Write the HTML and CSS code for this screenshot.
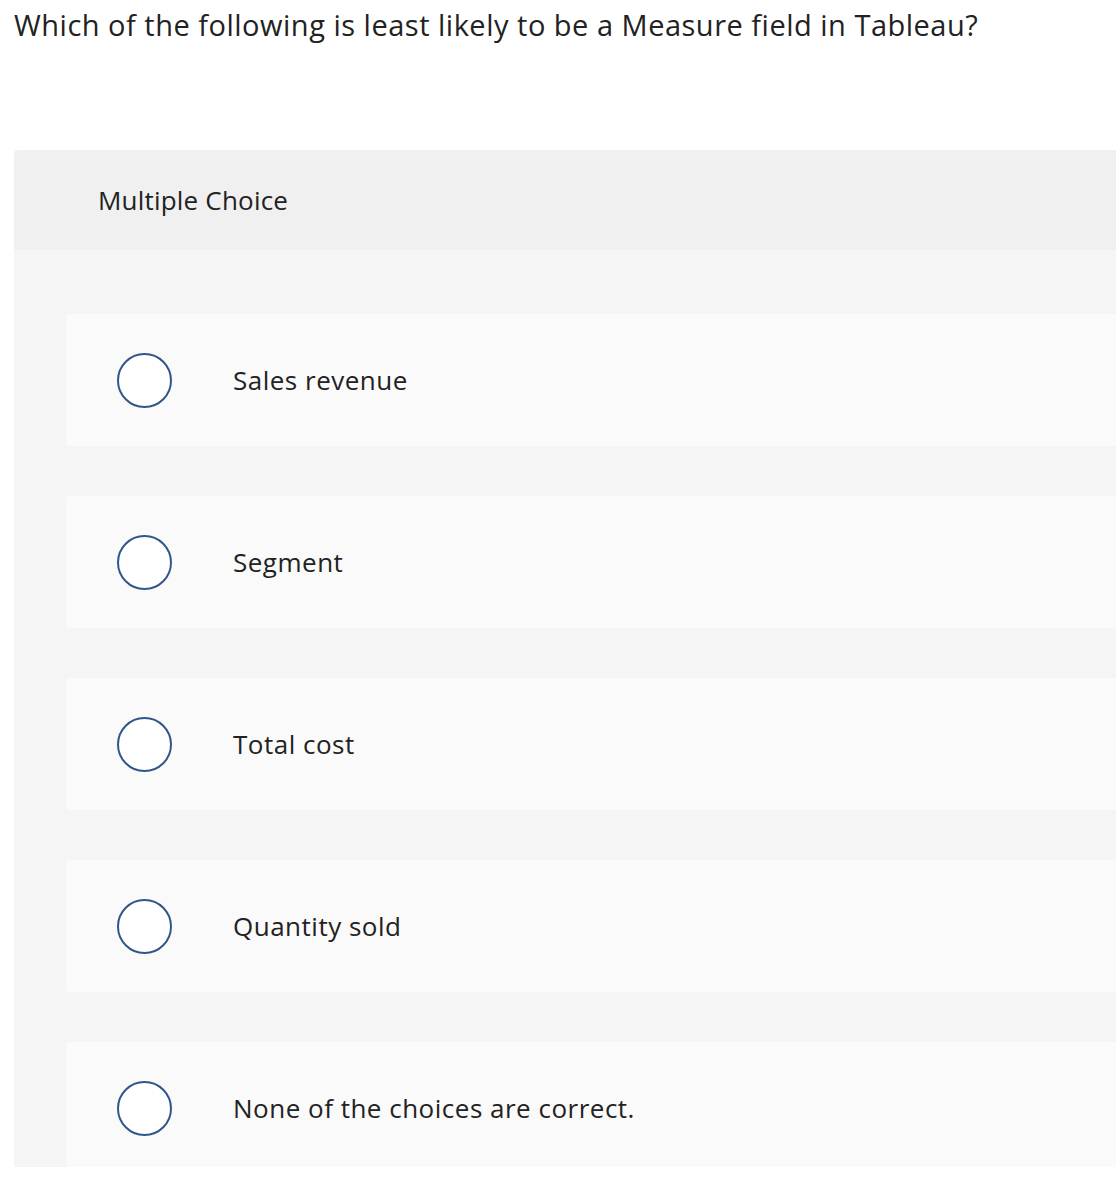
FILE: index.html
```html
<!DOCTYPE html>
<html lang="en">
<head>
  <meta charset="UTF-8" />
  <title>Multiple Choice</title>
  <link rel="stylesheet" href="styles.css">
</head>
<body>

  <!-- Pertanyaan -->
  <h1 class="question">Which of the following is least likely to be a Measure field in Tableau?</h1>

  <div class="panel">
    <div class="panel-head">Multiple Choice</div>

    <div class="choices">
      <label class="choice"><span class="radio"></span><span class="choice-text">Sales revenue</span></label>
      <label class="choice"><span class="radio"></span><span class="choice-text">Segment</span></label>
      <label class="choice"><span class="radio"></span><span class="choice-text">Total cost</span></label>
      <label class="choice"><span class="radio"></span><span class="choice-text">Quantity sold</span></label>
      <label class="choice"><span class="radio"></span><span class="choice-text">None of the choices are correct.</span></label>
    </div>
  </div>

</body>
</html>
```

FILE: styles.css
```css
/* ---------- Dasar ---------- */
body{
  margin:0;
  padding:0 0 0 14px;
  font-family:"Open Sans","Noto Sans",sans-serif;
  font-variant-ligatures:none;
  color:#222;
  background:#fff;
  overflow:hidden;
}

.question{
  margin:0;
  padding-top:7px;
  font-size:29px;
  font-weight:400;
  letter-spacing:.5px;
  line-height:36px;
  white-space:nowrap;
}

/* ---------- Panel ---------- */
.panel{
  margin-top:107px;
  height:1017px;
  overflow:hidden;
  background:#f5f5f5;
  border-radius:4px 0 0 0;
}
.panel-head{
  height:100px;
  display:flex;
  align-items:center;
  padding-left:84px;
  background:#f0f0f0;
  font-size:26px;
  letter-spacing:.2px;
}

/* ---------- Pilihan ---------- */
.choices{
  display:flex;
  flex-direction:column;
  gap:50px;
  padding:64px 0 0 52px;
}
.choice{
  height:132px;
  flex-shrink:0;
  display:flex;
  align-items:center;
  gap:61px;
  padding-left:51px;
  background:#fafafa;
  border-radius:4px 0 0 4px;
  font-size:26px;
  letter-spacing:.5px;
  cursor:pointer;
}
.radio{
  width:51px;
  height:51px;
  border:2px solid #2f5789;
  border-radius:50%;
  background:#fff;
  flex-shrink:0;
}
```
